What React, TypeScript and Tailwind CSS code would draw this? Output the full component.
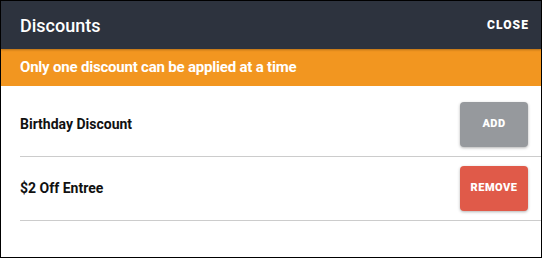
import React from "react";

export default function App() {
  const rows = [
    { name: "Birthday Discount", action: "ADD", cls: "bg-[#96999d]" },
    { name: "$2 Off Entree", action: "REMOVE", cls: "bg-[#e05a49]" },
  ];
  return (
    <div className="w-[542px] h-[258px] border border-black bg-white flex flex-col overflow-hidden font-['Roboto',sans-serif]">
      <div className="h-[48px] shrink-0 bg-[#2d333e] flex items-center justify-between pl-[19px] pr-[12px] relative z-10 shadow-[0_1px_2px_rgba(0,0,0,0.25)]">
        <span className="text-white text-[18px] font-medium">Discounts</span>
        <span className="text-white text-[12px] font-black tracking-[1.1px]">CLOSE</span>
      </div>
      <div className="h-[37px] shrink-0 bg-[#f29620] flex items-center pl-[19px] text-white text-[15px] font-bold tracking-[-0.2px]">
        Only one discount can be applied at a time
      </div>
      <div className="pt-[7px] pl-[19px]">
        {rows.map((r) => (
          <div
            key={r.name}
            className="flex items-center justify-between py-[9px] pr-[13px] border-b border-[#cccccc]"
          >
            <span className="text-[14px] font-bold text-[#111111]">{r.name}</span>
            <button
              className={`w-[68px] h-[45px] rounded-[4px] text-white text-[11px] font-black tracking-[0.5px] shadow-[0_1px_3px_rgba(0,0,0,0.3)] ${r.cls}`}
            >
              {r.action}
            </button>
          </div>
        ))}
      </div>
    </div>
  );
}
